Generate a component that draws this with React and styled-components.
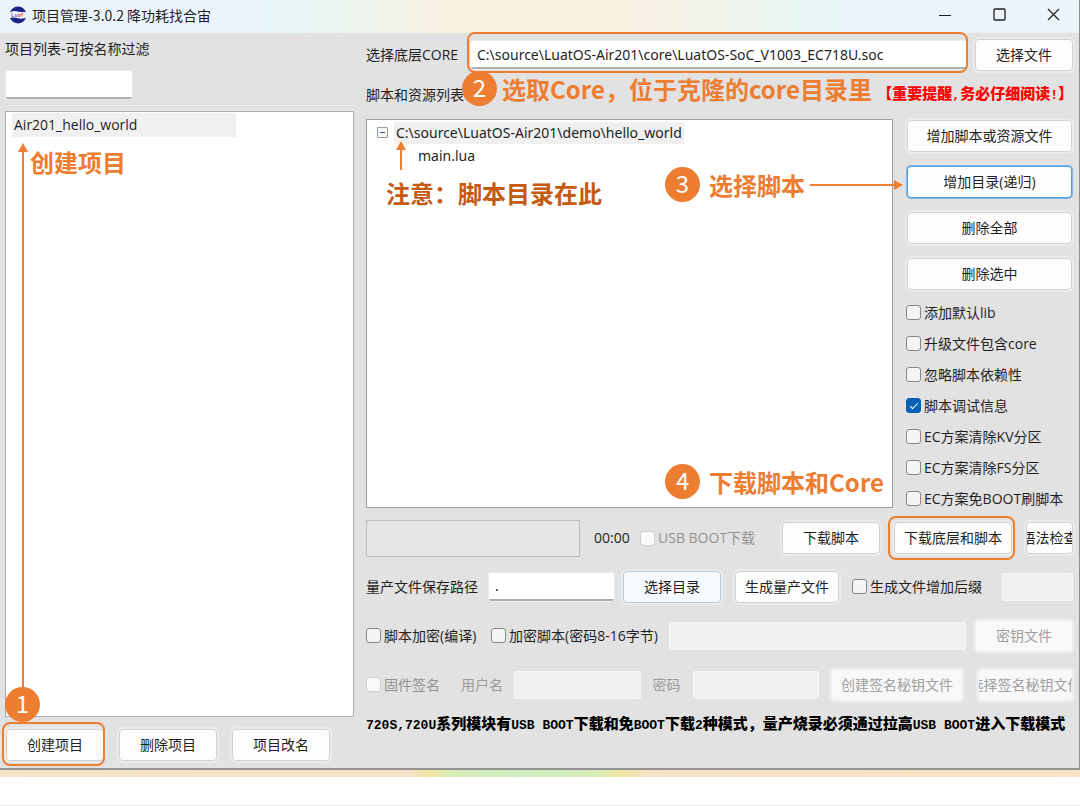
import React from "react";
import styled, { createGlobalStyle, css } from "styled-components";

const orange = "#ed7d31";

const GlobalStyle = createGlobalStyle`
  *, *::before, *::after { box-sizing: border-box; }
  body {
    margin: 0;
    background: #fff;
    color: #1f1f1f;
    font: 14px/18px "Open Sans", "Noto Sans CJK SC", sans-serif;
  }
  button, input { font: inherit; color: inherit; }
  ul { list-style: none; margin: 0; padding: 0; }
`;

const Page = styled.div`
  min-height: 100vh;
  display: flex;
  flex-direction: column;
`;

const Window = styled.main`
  flex: 1;
  display: flex;
  flex-direction: column;
  background: #e2e2e2;
  border-right: 1px solid #8c8c8c;
  border-bottom: 2px solid #949494;
`;

const TitleBar = styled.header`
  height: 33px;
  display: flex;
  align-items: center;
  padding: 0 0 4px 9px;
  background: linear-gradient(90deg, #ebf4fa 0%, #ebf4fb 22%, #e6f6f5 28%, #eef4ec 34%, #faf2e3 41%, #faf0e2 58%, #eef4ec 69%, #e6f6f4 75%, #ebf3fb 81%, #ebf4f9 100%);
`;

const Title = styled.h1`
  flex: 1;
  margin: 0 0 0 5px;
  font: 400 14px/16px "Noto Sans CJK SC", sans-serif;
  white-space: nowrap;
`;

const WindowButton = styled.button`
  width: 54px;
  height: 28px;
  padding: 0 0 0 2px;
  border: 0;
  background: none;
  display: grid;
  place-items: center;
`;

const Body = styled.div`
  flex: 1;
  display: grid;
  grid-template-columns: minmax(0, 349fr) minmax(0, 707fr);
  gap: 12px;
  padding: 7px 6px 7px 5px;
`;

const Column = styled.section`
  display: flex;
  flex-direction: column;
  min-width: 0;
`;

const Label = styled.label`
  flex: none;
  width: ${(p) => (p.$w ? `${p.$w}px` : "auto")};
  white-space: nowrap;
  color: ${(p) => (p.$dim ? "#9b9b9b" : "inherit")};
`;

const TextBox = styled.input.attrs({ type: "text" })`
  flex: ${(p) => (p.$w ? "none" : "1 1 0")};
  width: ${(p) => (p.$w ? `${p.$w}px` : "auto")};
  min-width: 0;
  height: 28px;
  padding: 0 6px;
  font-family: "Noto Sans", sans-serif;
  background: #fff;
  border: 0;
  border-bottom: 2px solid #b0b0b0;
  border-radius: 2px;
  outline: none;
  box-shadow: 0 0 0 1px #ececec;
  &:disabled {
    background: #efefef;
    border: 1px solid #f6f6f6;
    box-shadow: none;
  }
`;

const FilterBox = styled(TextBox)`
  flex: none;
  margin: 13px 0 12px 1px;
`;

const Button = styled.button`
  flex: none;
  display: flex;
  align-items: center;
  justify-content: center;
  width: ${(p) => (p.$w ? `${p.$w}px` : "100%")};
  height: 32px;
  padding: 0 2px;
  overflow: hidden;
  white-space: nowrap;
  background: #fdfdfd;
  border: 1px solid #d2d2d2;
  border-radius: 4px;
  box-shadow: 0 0 0 2px #ebebeb;
  ${(p) => p.$tone === "focus" && css`border-color: #56a0de; box-shadow: 0 0 0 1px #7db5e4;`}
  ${(p) => p.$tone === "hover" && css`background: #f5fafe; border-color: #b5cde2;`}
  &:disabled {
    color: #a0a0a0;
    background: #f8f8f8;
    border-color: #f0f0f0;
  }
`;

const Highlight = styled.div`
  position: relative;
  display: flex;
  flex: ${(p) => (p.$grow ? "1 1 0" : "none")};
  min-width: 0;
  &::after {
    content: "";
    position: absolute;
    inset: ${(p) => p.$inset};
    border: 2px solid ${orange};
    border-radius: 8px;
    pointer-events: none;
  }
`;

const ProjectPane = styled.div`
  position: relative;
  flex: 1;
  padding: 1px 6px;
  background: #fff;
  border: 1px solid #a9adb5;
`;

const ProjectItem = styled.li`
  width: 67%;
  height: 24px;
  line-height: 24px;
  padding-left: 2px;
  background: #f0f0f0;
`;

const ProjectActions = styled.div`
  display: flex;
  gap: 15px;
  padding: 0 1px;
  margin-top: 12px;
`;

const Row = styled.div`
  position: relative;
  display: flex;
  align-items: center;
  height: ${(p) => p.$h}px;
  gap: ${(p) => p.$gap || 0}px;
`;

const Group = styled.div`
  display: flex;
  align-items: center;
  flex: none;
  width: ${(p) => (p.$w ? `${p.$w}px` : "auto")};
  gap: ${(p) => p.$gap || 0}px;
`;

const ActionPair = styled(Group)`
  gap: 14px;
  padding: 0 13px 0 9px;
`;

const Spring = styled.span`
  flex: 1;
`;

const NoticeLink = styled.a`
  margin-left: auto;
  font: 900 15px/18px "Noto Sans CJK SC", sans-serif;
  color: #f00;
  text-decoration: none;
  white-space: nowrap;
`;

const Workspace = styled.div`
  display: grid;
  grid-template-columns: minmax(0, 1fr) 167px;
  gap: 13px;
`;

const TreePane = styled.div`
  position: relative;
  margin-bottom: 6px;
  padding: 1px 10px;
  background: #fff;
  border: 1px solid #9a9fa8;
`;

const TreeItem = styled.li`
  display: flex;
  align-items: center;
  height: 23px;
  padding-left: ${(p) => p.$indent || 0}px;
`;

const Toggle = styled.button`
  width: 11px;
  height: 11px;
  padding: 0;
  margin-right: 6px;
  display: grid;
  place-items: center;
  background: #f6f6f6;
  border: 1px solid #9a9a9a;
  border-radius: 1px;
  &::before {
    content: "";
    width: 5px;
    height: 1px;
    background: #3b55a5;
  }
`;

const NodeText = styled.span`
  padding: 2px 2px;
  font-family: "Noto Sans", sans-serif;
  background: ${(p) => (p.$selected ? "#f0f0f0" : "none")};
`;

const SidePane = styled.div`
  display: flex;
  flex-direction: column;
  padding-top: 1px;
`;

const SideButtons = styled.div`
  display: flex;
  flex-direction: column;
  gap: 14px;
  margin: 0 1px 7px;
`;

const CheckLabel = styled.label`
  flex: none;
  display: flex;
  align-items: center;
  gap: 3px;
  height: 31px;
  width: ${(p) => (p.$w ? `${p.$w}px` : "auto")};
  white-space: nowrap;
  color: ${(p) => (p.$dim ? "#929292" : "inherit")};
`;

const CheckBox = styled.input.attrs({ type: "checkbox" })`
  appearance: none;
  flex: none;
  width: 15px;
  height: 15px;
  margin: 0;
  display: grid;
  place-items: center;
  background: #f5f5f5;
  border: 1px solid #868686;
  border-radius: 3px;
  &:disabled {
    background: #fafafa;
    border-color: #cfcfcf;
  }
  &:checked {
    background: #0560b6;
    border-color: #0560b6;
  }
  &:checked::after {
    content: "";
    width: 8px;
    height: 4px;
    margin-bottom: 2px;
    border: solid #fff;
    border-width: 0 0 1px 1px;
    transform: rotate(-45deg);
  }
`;

const Progress = styled.div`
  flex: 1;
  height: 37px;
  background: #e6e6e6;
  border: 1px solid #bcbcbc;
`;

const Footnote = styled.p`
  margin: 0;
  font: 900 15px/28px "Noto Sans CJK SC", sans-serif;
  color: #000;
  white-space: nowrap;
`;

const Mono = styled.span`
  font-family: "Liberation Mono", monospace;
  font-size: 13px;
`;

const Callout = styled.div`
  position: absolute;
  z-index: 1;
  top: ${(p) => p.$top};
  right: ${(p) => p.$right};
  bottom: ${(p) => p.$bottom};
  left: ${(p) => p.$left};
  display: flex;
  align-items: center;
  gap: ${(p) => p.$gap || 0}px;
  font: 700 24px/32px "Noto Sans CJK SC", sans-serif;
  color: ${(p) => (p.$dark ? "#c55a11" : orange)};
  white-space: nowrap;
  pointer-events: none;
`;

const Badge = styled.span`
  width: 35px;
  height: 35px;
  border-radius: 50%;
  background: ${orange};
  color: #fff;
  font-size: 24px;
  font-weight: 400;
  text-align: center;
`;

const UpArrow = styled.span`
  position: absolute;
  top: ${(p) => p.$top}px;
  bottom: ${(p) => (p.$bottom === undefined ? "auto" : `${p.$bottom}px`)};
  left: ${(p) => p.$left}px;
  height: ${(p) => (p.$h ? `${p.$h}px` : "auto")};
  width: 10px;
  background: linear-gradient(${orange}, ${orange}) 4px 8px / 2px 100% no-repeat;
  &::before {
    content: "";
    position: absolute;
    inset: 0 0 auto;
    border: 5px solid transparent;
    border-top: 0;
    border-bottom: 9px solid ${orange};
  }
`;

const RightArrow = styled.span`
  width: 93px;
  height: 10px;
  margin-left: -4px;
  display: flex;
  align-items: center;
  &::before {
    content: "";
    flex: 1;
    height: 2px;
    background: ${orange};
  }
  &::after {
    content: "";
    border: 5px solid transparent;
    border-right: 0;
    border-left: 9px solid ${orange};
  }
`;

const Desktop = styled.footer`
  height: 36px;
  border-bottom: 1px solid #ececec;
  &::before {
    content: "";
    display: block;
    height: 7px;
    background: linear-gradient(90deg, #f6e4c6 0%, #f6e2c6 38%, #efe6a2 40%, #d6edb8 42%, #d2edc2 48%, #d6edb8 55%, #efe6a2 57.5%, #f6e2c6 60%, #f8e3c4 100%);
  }
`;

function Check({ children, checked, disabled, w }) {
  return (
    <CheckLabel $w={w} $dim={disabled}>
      <CheckBox defaultChecked={checked} disabled={disabled} />
      {children}
    </CheckLabel>
  );
}

function Logo() {
  return (
    <svg width="18" height="18" viewBox="0 0 18 18" aria-hidden="true">
      <circle cx="9" cy="9" r="8.5" fill="#1c2488" />
      <path d="M0 6.5 Q4 4.2 9 5.4 T18 5.5 V11.5 Q13 13.4 9 12.2 T0 12Z" fill="#f3f3fb" />
      <path d="M3 6.5V10.5H5M6.2 8V10.5H8V8" fill="none" stroke="#7d86cc" strokeWidth="1" />
      <path d="M9.3 8.2H11V10.5H9.3V9.3H11M13 6.8V10.5M12 8.2H14.2" fill="none" stroke="#e8706a" strokeWidth="1" />
    </svg>
  );
}

const options = [
  ["添加默认lib"],
  ["升级文件包含core"],
  ["忽略脚本依赖性"],
  ["脚本调试信息", true],
  ["EC方案清除KV分区"],
  ["EC方案清除FS分区"],
  ["EC方案免BOOT刷脚本"],
];

export default function App() {
  return (
    <Page>
      <GlobalStyle />
      <Window>
        <TitleBar>
          <Logo />
          <Title>项目管理-3.0.2 降功耗找合宙</Title>
          <WindowButton aria-label="最小化">
            <svg width="12" height="12" stroke="#222" fill="none"><path d="M0 6.5H12" /></svg>
          </WindowButton>
          <WindowButton aria-label="最大化">
            <svg width="13" height="13" stroke="#222" fill="none" strokeWidth="1.3"><rect x="1" y="1" width="11" height="11" rx="1" /></svg>
          </WindowButton>
          <WindowButton aria-label="关闭">
            <svg width="13" height="13" stroke="#222" fill="none" strokeWidth="1.2"><path d="M1 1L12 12M12 1L1 12" /></svg>
          </WindowButton>
        </TitleBar>
        <Body>
          <Column>
            <Label htmlFor="filter">项目列表-可按名称过滤</Label>
            <FilterBox id="filter" $w={126} />
            <ProjectPane>
              <ul>
                <ProjectItem>Air201_hello_world</ProjectItem>
              </ul>
              <UpArrow $top={31} $bottom={24} $left={12} />
              <Callout $top="34px" $left="24px">创建项目</Callout>
              <Callout $bottom="-6px" $left="-1px"><Badge>1</Badge></Callout>
            </ProjectPane>
            <ProjectActions>
              <Highlight $inset="-7px -1px -5px -4px">
                <Button $w={98}>创建项目</Button>
              </Highlight>
              <Button $w={98}>删除项目</Button>
              <Button $w={98}>项目改名</Button>
            </ProjectActions>
          </Column>

          <Column>
            <Row $h={30} $gap={9}>
              <Label htmlFor="core" $w={96}>选择底层CORE</Label>
              <Highlight $grow $inset="-9px -2px -4px -4px">
                <TextBox id="core" defaultValue="C:\source\LuatOS-Air201\core\LuatOS-SoC_V1003_EC718U.soc" />
              </Highlight>
              <Button $w={98}>选择文件</Button>
            </Row>
            <Row $h={49}>
              <Label as="span">脚本和资源列表</Label>
              <Callout $top="1px" $left="96px" $gap={5}>
                <Badge>2</Badge>选取Core，位于克隆的core目录里
              </Callout>
              <NoticeLink href="#notice">【重要提醒<Mono>,</Mono>务必仔细阅读<Mono>!</Mono>】</NoticeLink>
            </Row>
            <Workspace>
              <TreePane>
                <ul>
                  <TreeItem>
                    <Toggle aria-label="折叠" />
                    <NodeText $selected>C:\source\LuatOS-Air201\demo\hello_world</NodeText>
                  </TreeItem>
                  <TreeItem $indent={39}>
                    <NodeText>main.lua</NodeText>
                  </TreeItem>
                </ul>
                <UpArrow $top={21} $left={29} $h={29} />
                <Callout $dark $top="57px" $left="19px">注意：脚本目录在此</Callout>
                <Callout $top="47px" $right="-11px" $gap={9}>
                  <Badge>3</Badge>选择脚本
                  <RightArrow />
                </Callout>
                <Callout $bottom="8px" $right="8px" $gap={9}>
                  <Badge>4</Badge>下载脚本和Core
                </Callout>
              </TreePane>
              <SidePane>
                <SideButtons>
                  <Button>增加脚本或资源文件</Button>
                  <Button $tone="focus">增加目录(递归)</Button>
                  <Button>删除全部</Button>
                  <Button>删除选中</Button>
                </SideButtons>
                {options.map(([text, checked]) => (
                  <Check key={text} checked={checked}>{text}</Check>
                ))}
              </SidePane>
            </Workspace>
            <Row $h={48} $gap={14}>
              <Progress role="progressbar" aria-label="下载进度" />
              <Group $w={174}>
                <Label as="span" $w={46}>00:00</Label>
                <Check disabled>USB BOOT下载</Check>
              </Group>
              <Button $w={98}>下载脚本</Button>
              <Highlight $inset="-6px -3px -6px -6px">
                <Button $w={118}>下载底层和脚本</Button>
              </Highlight>
              <Button $w={47}>语法检查</Button>
            </Row>
            <Row $h={49}>
              <Label htmlFor="path" $w={123}>量产文件保存路径</Label>
              <TextBox id="path" $w={125} defaultValue="." />
              <ActionPair>
                <Button $w={98} $tone="hover">选择目录</Button>
                <Button $w={104}>生成量产文件</Button>
              </ActionPair>
              <Check>生成文件增加后缀</Check>
              <Spring />
              <TextBox $w={71} disabled aria-label="后缀" />
            </Row>
            <Row $h={49} $gap={9}>
              <Check w={116}>脚本加密(编译)</Check>
              <Check w={169}>加密脚本(密码8-16字节)</Check>
              <TextBox disabled aria-label="加密密码" />
              <Button $w={98} disabled>密钥文件</Button>
            </Row>
            <Row $h={49} $gap={12}>
              <Check disabled w={83}>固件签名</Check>
              <Label htmlFor="user" $dim $w={41}>用户名</Label>
              <TextBox id="user" disabled />
              <Label htmlFor="pwd" $dim $w={28}>密码</Label>
              <TextBox id="pwd" disabled />
              <Group $gap={15}>
                <Button $w={132} disabled>创建签名秘钥文件</Button>
                <Button $w={95} disabled>选择签名秘钥文件</Button>
              </Group>
            </Row>
            <Footnote>
              <Mono>720S,720U</Mono>系列模块有<Mono>USB BOOT</Mono>下载和免<Mono>BOOT</Mono>下载<Mono>2</Mono>种模式，量产烧录必须通过拉高<Mono>USB BOOT</Mono>进入下载模式
            </Footnote>
          </Column>
        </Body>
      </Window>
      <Desktop />
    </Page>
  );
}
